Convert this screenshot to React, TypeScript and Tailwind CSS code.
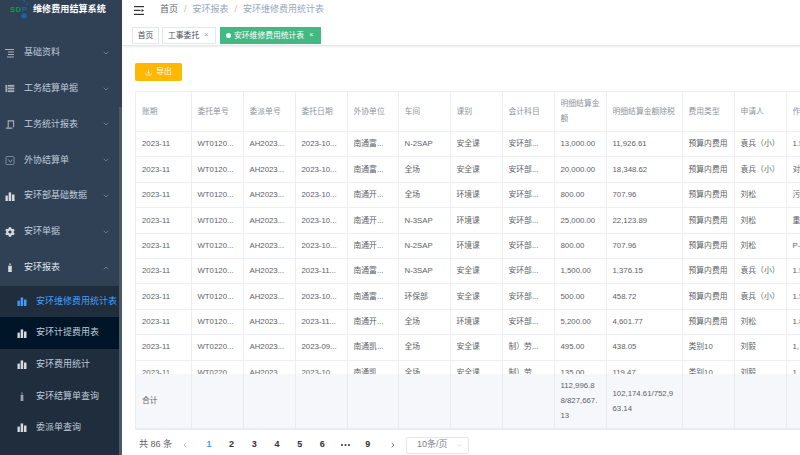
import React from "react";
import { ChevronDown, ChevronUp, ChevronLeft, ChevronRight, Download } from "lucide-react";
import { FaCog } from "react-icons/fa";

const cols = [55, 52, 52, 52, 51, 52, 52, 52, 52, 76, 52, 52, 60];
const cn = '"Liberation Sans", "Noto Sans CJK SC", sans-serif';

function Bars({ className = "" }: { className?: string }) {
  return (
    <svg viewBox="0 0 10 10" className={className} fill="currentColor">
      <rect x="0" y="4" width="2.6" height="6" />
      <rect x="3.5" y="0.5" width="2.8" height="9.5" />
      <rect x="7.2" y="2.8" width="2.8" height="7.2" />
    </svg>
  );
}

function MenuIcon({ kind }: { kind: string }) {
  if (kind === "bars") return <Bars className="h-[9px] w-[10px] text-[#d5dae0]" />;
  if (kind === "gear") return <FaCog className="h-[10px] w-[10px] text-[#d5dae0]" />;
  if (kind === "bat")
    return (
      <svg viewBox="0 0 10 10" className="h-[9px] w-[10px] text-[#d5dae0]" fill="currentColor">
        <rect x="3" y="3" width="4" height="7" />
        <rect x="4.2" y="0.5" width="1.6" height="1.6" />
      </svg>
    );
  if (kind === "list")
    return (
      <svg viewBox="0 0 10 10" className="h-[10px] w-[10px] text-[#a9b2bc]" stroke="currentColor" strokeWidth="1" fill="none">
        <path d="M0 1.5h9M3 4h6M3 6.5h6M2 9h7" />
      </svg>
    );
  if (kind === "table")
    return (
      <svg viewBox="0 0 10 10" className="h-[9px] w-[10px] text-[#a9b2bc]" fill="currentColor">
        <rect x="0" y="1" width="2" height="8" />
        <rect x="2.8" y="1" width="7" height="2" />
        <rect x="2.8" y="4" width="7" height="2" />
        <rect x="2.8" y="7" width="7" height="2" />
      </svg>
    );
  if (kind === "doc")
    return (
      <svg viewBox="0 0 10 10" className="h-[9px] w-[10px] text-[#a9b2bc]" stroke="currentColor" fill="none">
        <path d="M3 8V1h6v7M0.5 9h7" strokeWidth="1.2" />
      </svg>
    );
  return (
    <svg viewBox="0 0 10 10" className="h-[9px] w-[10px] text-[#9aa4af]" stroke="currentColor" fill="none" strokeWidth="0.8">
      <rect x="0.5" y="0.5" width="9" height="9" rx="1" />
      <path d="M2.5 4l2 1 1 2 2-3" />
    </svg>
  );
}

const menu = [
  { t: "基础资料", i: "list" },
  { t: "工务结算单据", i: "table" },
  { t: "工务统计报表", i: "doc" },
  { t: "外协结算单", i: "box" },
  { t: "安环部基础数据", i: "bars" },
  { t: "安环单据", i: "gear" },
];

const subs = [
  { t: "安环维修费用统计表", active: true },
  { t: "安环计提费用表", hover: true },
  { t: "安环费用统计" },
  { t: "安环结算单查询", small: true },
  { t: "委派单查询" },
];

const head = ["账期", "委托单号", "委派单号", "委托日期", "外协单位", "车间", "课别", "会计科目", "明细结算金额", "明细结算金额除税", "费用类型", "申请人", "作业内容"];

const rows = [
  ["WT0120...", "2023-10...", "南通富...", "N-2SAP", "安全课", "安环部...", "13,000.00", "11,926.61", "预算内费用", "袁兵（小）", "1.5"],
  ["WT0120...", "2023-10...", "南通富...", "全场", "安全课", "安环部...", "20,000.00", "18,348.62", "预算内费用", "袁兵（小）", "对"],
  ["WT0120...", "2023-10...", "南通开...", "全场", "环境课", "安环部...", "800.00", "707.96", "预算内费用", "刘松", "污"],
  ["WT0120...", "2023-10...", "南通开...", "N-3SAP", "环境课", "安环部...", "25,000.00", "22,123.89", "预算内费用", "刘松", "重"],
  ["WT0120...", "2023-10...", "南通开...", "N-2SAP", "环境课", "安环部...", "800.00", "707.96", "预算内费用", "刘松", "P-"],
  ["WT0120...", "2023-11...", "南通富...", "N-3SAP", "安全课", "安环部...", "1,500.00", "1,376.15", "预算内费用", "袁兵（小）", "1.5"],
  ["WT0120...", "2023-10...", "南通富...", "环保部", "安全课", "安环部...", "500.00", "458.72", "预算内费用", "袁兵（小）", "1.5"],
  ["WT0120...", "2023-11...", "南通开...", "全场", "环境课", "安环部...", "5,200.00", "4,601.77", "预算内费用", "刘松", "1.8"],
  ["WT0220...", "2023-09...", "南通凯...", "全场", "安全课", "制）劳...", "495.00", "438.05", "类别10", "刘毅", "1,"],
  ["WT0220...", "2023-10...", "南通凯...", "全场", "安全课", "制）劳...", "135.00", "119.47", "类别10", "刘毅", "1"],
];

function Colgroup() {
  return (
    <colgroup>
      {cols.map((w, i) => (
        <col key={i} style={{ width: w }} />
      ))}
    </colgroup>
  );
}

export default function App() {
  const tableW = cols.reduce((a, b) => a + b, 0);
  return (
    <div className="flex h-[455px] w-[800px] overflow-hidden bg-white text-[9px] text-[#606266]" style={{ fontFamily: cn }}>
      <aside className="relative flex w-[122px] shrink-0 flex-col overflow-hidden bg-[#304156]">
        <div className="flex h-[35px] shrink-0 items-start pl-[9px]">
          <svg viewBox="0 0 24 20" className="h-[20px] w-[24px]">
            <circle cx="15" cy="1" r="1" fill="#1565a8" />
            <circle cx="18" cy="4" r="1" fill="#1565a8" />
            <circle cx="15" cy="16" r="2.8" fill="#1565a8" />
            <text x="1" y="12" fontSize="7.5" fontWeight="700" fill="#11994f" fontFamily="Liberation Sans" letterSpacing="0.6">SD</text>
            <text x="13" y="12" fontSize="7.5" fontWeight="700" fill="#1565a8" fontFamily="Liberation Sans">P</text>
          </svg>
          <span className="mt-[3px] whitespace-nowrap text-[9.1px] font-bold text-white">维修费用结算系统</span>
        </div>
        {menu.map((m) => (
          <div key={m.t} className="flex h-[35.8px] shrink-0 items-center pr-[12px] pl-[5px] text-[#bfcbd9]">
            <span className="flex w-[19px] shrink-0"><MenuIcon kind={m.i} /></span>
            <span className="flex-1 whitespace-nowrap">{m.t}</span>
            <ChevronDown className="h-[8px] w-[8px] text-[#8795a5]" />
          </div>
        ))}
        <div className="flex h-[36px] shrink-0 items-center pr-[12px] pl-[5px] text-[#dfe5ec]">
          <span className="flex w-[19px] shrink-0"><MenuIcon kind="bat" /></span>
          <span className="flex-1 whitespace-nowrap">安环报表</span>
          <ChevronUp className="h-[8px] w-[8px] text-[#8795a5]" />
        </div>
        {subs.map((s) => (
          <div
            key={s.t}
            className={`flex h-[31.6px] shrink-0 items-center pl-[17px] ${s.hover ? "bg-[#001528]" : "bg-[#1f2d3d]"} ${s.active ? "text-[#409eff]" : "text-[#bfcbd9]"}`}
          >
            <span className="flex w-[19px] shrink-0">
              {s.small ? (
                <svg viewBox="0 0 10 10" className="h-[9px] w-[10px] text-[#9aa4af]" fill="currentColor">
                  <rect x="3.5" y="3" width="3" height="7" />
                  <rect x="4.3" y="0.5" width="1.4" height="1.4" />
                </svg>
              ) : (
                <Bars className={`h-[9px] w-[10px] ${s.active ? "text-[#409eff]" : "text-[#d5dae0]"}`} />
              )}
            </span>
            <span className="whitespace-nowrap">{s.t}</span>
          </div>
        ))}
        <div className="flex-1 bg-[#1f2d3d]" />
        <div className="absolute top-[107px] right-0 h-[348px] w-[3px] bg-[#4a5869]" />
      </aside>

      <main className="flex min-w-0 flex-1 flex-col">
        <header className="flex h-[20px] shrink-0 items-center gap-[6px] pl-[12px] text-[9px]">
          <svg viewBox="0 0 10 9" className="mr-[10px] h-[9px] w-[10px] text-[#303133]" fill="currentColor">
            <rect x="0" y="0" width="10" height="1.2" />
            <rect x="0" y="3.8" width="6.5" height="1.2" />
            <path d="M7.5 3v3l2.5-1.5z" />
            <rect x="0" y="7.8" width="10" height="1.2" />
          </svg>
          <span className="text-[#606266]">首页</span>
          <span className="text-[#b5bcc6]">/</span>
          <span className="text-[#97a8be]">安环报表</span>
          <span className="text-[#b5bcc6]">/</span>
          <span className="text-[#97a8be]">安环维修费用统计表</span>
        </header>
        <div className="mt-[5px] flex h-[21px] shrink-0 items-start border-b border-[#e4e7ed] pt-[2px] pl-[10px] text-[7.8px] shadow-[0_1px_2px_rgba(0,0,0,0.08)]">
          <span className="flex h-[17px] w-[27px] items-center justify-center border border-[#e4e7ed] text-[#495060]">首页</span>
          <span className="ml-[3px] flex h-[17px] w-[54px] items-center border border-[#e4e7ed] pl-[5px] text-[#495060]">
            工事委托<span className="ml-[5px] text-[7px] text-[#909399]">×</span>
          </span>
          <span className="ml-[4px] flex h-[17px] w-[101px] items-center bg-[#42b983] pl-[6px] text-white">
            <span className="mr-[3px] h-[5px] w-[5px] rounded-full bg-white" />
            安环维修费用统计表<span className="ml-[5px] text-[7px]">×</span>
          </span>
        </div>

        <div className="min-h-0 flex-1 pl-[13px]">
          <button className="mt-[17px] flex h-[18px] w-[47px] items-center justify-center gap-[4px] rounded-[2px] bg-[#ffb800] text-[7.8px] text-white">
            <Download className="h-[7px] w-[7px]" />
            导出
          </button>

          <div className="mt-[10px] overflow-hidden border-t border-l border-[#ebeef5]" style={{ width: 665 }}>
            <table className="table-fixed border-collapse" style={{ width: tableW }}>
              <Colgroup />
              <thead>
                <tr className="h-[39px]">
                  {head.map((h) => (
                    <th key={h} className="border-r border-b border-[#ebeef5] px-[6px] text-left align-middle text-[7.8px] leading-[15px] font-normal text-[#909399]">
                      <div className="flex h-[30px] items-center overflow-hidden">{h.startsWith("作") ? <span className="whitespace-nowrap">{h}</span> : h}</div>
                    </th>
                  ))}
                </tr>
              </thead>
            </table>
            <div className="h-[242px] overflow-hidden">
              <table className="table-fixed border-collapse" style={{ width: tableW }}>
                <Colgroup />
                <tbody>
                  {rows.map((r, i) => (
                    <tr key={i} className="h-[25.4px] text-[7.8px]">
                      <td className="border-r border-b border-[#ebeef5] px-[6px] whitespace-nowrap">2023-11</td>
                      <td className="border-r border-b border-[#ebeef5] px-[6px] whitespace-nowrap">{r[0]}</td>
                      <td className="border-r border-b border-[#ebeef5] px-[6px] whitespace-nowrap">AH2023...</td>
                      {r.slice(1).map((c, j) => (
                        <td key={j} className="overflow-hidden border-r border-b border-[#ebeef5] px-[6px] whitespace-nowrap">{c}</td>
                      ))}
                    </tr>
                  ))}
                </tbody>
              </table>
            </div>
            <table className="table-fixed border-collapse bg-[#f5f7fa]" style={{ width: tableW }}>
              <Colgroup />
              <tbody>
                <tr className="h-[55px] text-[7.8px] leading-[15px]">
                  {cols.map((_, i) => (
                    <td key={i} className="border-r border-b-2 border-[#e8ebf2] px-[6px] break-all">
                      {i === 0 ? "合计" : i === 8 ? "112,996.88/827,667.13" : i === 9 ? "102,174.61/752,963.14" : ""}
                    </td>
                  ))}
                </tr>
              </tbody>
            </table>
          </div>

          <div className="mt-[7px] ml-[4px] flex h-[17px] items-center text-[9px]">
            <span className="w-[36px] whitespace-nowrap text-[#606266]">共 86 条</span>
            <span className="flex w-[14px] justify-end"><ChevronLeft className="h-[8px] w-[8px] text-[#a8abb2]" /></span>
            {["1", "2", "3", "4", "5", "6", "•••", "9"].map((p, i) => (
              <span
                key={p}
                className={`flex w-[22.7px] justify-center font-bold ${i === 0 ? "ml-[8.6px] text-[#409eff]" : "text-[#303133]"}`}
              >
                {p === "•••" ? (
                  <svg viewBox="0 0 9 2" className="h-[2px] w-[9px]" fill="currentColor">
                    <circle cx="1" cy="1" r="1" />
                    <circle cx="4.5" cy="1" r="1" />
                    <circle cx="8" cy="1" r="1" />
                  </svg>
                ) : (
                  p
                )}
              </span>
            ))}
            <span className="flex w-[27px] justify-center"><ChevronRight className="h-[8px] w-[8px] text-[#303133]" /></span>
            <span className="flex h-[17px] w-[63px] items-center justify-between rounded-[2px] border border-[#e4e7ed] pr-[5px] pl-[10px] text-[#7c7f86]">
              10条/页
              <ChevronDown className="h-[7px] w-[7px] text-[#c0c4cc]" />
            </span>
          </div>
        </div>
      </main>
    </div>
  );
}
